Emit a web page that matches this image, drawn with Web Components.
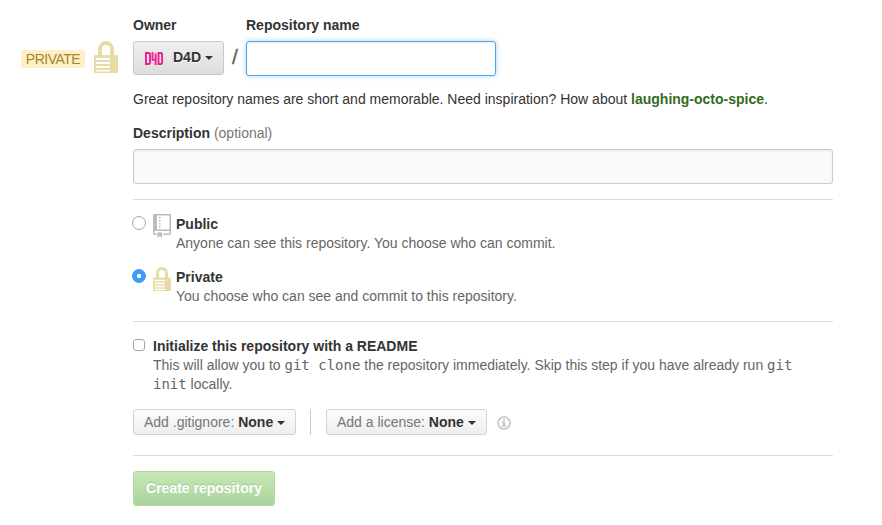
<!DOCTYPE html>
<html lang="en">
<head>
<meta charset="utf-8">
<title>Create a new repository</title>
<style>
html,body{margin:0;background:#fff}
body{width:882px;height:525px;overflow:hidden;font:14px/20px "Liberation Sans",Arial,sans-serif;color:#333}
</style>
</head>
<body>
<new-repository></new-repository>
<script>
const define = (name, css, html) => customElements.define(name, class extends HTMLElement {
  constructor() {
    super();
    const t = document.createElement('template');
    t.innerHTML = `<style>*{box-sizing:border-box}${css}</style>${html.trim()}`;
    this.attachShadow({mode: 'open'}).append(t.content.cloneNode(true));
  }
});

define('lock-icon', ':host{display:block;width:24px;height:32px}svg{display:block;width:100%;height:100%}', `
<svg viewBox="0 0 24 32"><path fill="#e9dba5" fill-rule="evenodd" d="M4 14V8.200a8 8.200 0 0 1 16 0V14h2.500q1.500 0 1.500 1.500v15q0 1.500-1.500 1.500h-21q-1.500 0-1.500-1.500v-15q0-1.500 1.500-1.500zM8 14h8V8.200a4 4.200 0 0 0-8 0zM2 17v2h14v-2zM2 21v2h14v-2zM2 25v2h14v-2zM2 29v1.600h14V29z"/></svg>`);

define('repo-icon', ':host{display:block;width:18px;height:24px}svg{display:block}', `
<svg width="18" height="24" viewBox="0 0 18 24"><g fill="#bbb"><path fill-rule="evenodd" d="M1 0h16q1 0 1 1v18.500q0 1.500-1.500 1.500H10v-1.500h6.500V17H1.500v2.500H4V21H1.500Q0 21 0 19.500V1q0-1 1-1zM4 1.500V15.500h12.500v-14z"/><path d="M6 3h1.500v1.500H6zM6 6h1.500v1.500H6zM6 9h1.500v1.500H6zM6 12h1.500v1.500H6zM4.500 18.500h4.500V24l-2.250-2L4.500 24z"/></g></svg>`);

define('info-icon', ':host{display:block;width:14px;height:14px}svg{display:block}', `
<svg width="14" height="14" viewBox="0 0 14 14"><circle cx="7" cy="7" r="6" fill="none" stroke="#ccc" stroke-width="1.900"/><path fill="#bbb" d="M6.200 3h1.700v1.600H6.200zM5 5.600h2.900v3.600H9v1.300H5V9.200h1.200V6.900H5z"/></svg>`);

define('team-avatar', ':host{display:block;width:20px;height:20px}svg{display:block}', `
<svg width="20" height="20" viewBox="0 0 20 20" fill="none" stroke="#ee1e93" stroke-width="1.900"><path d="M1.950 4.950h3l1 1v9.100l-1 1h-3zM8.500 4v7.900h4M11.600 5.500v11.500M14.500 4.950h2.600l1 1v9.100l-1 1h-2.600z"/></svg>`);

define('select-button', `
:host{display:flex;align-items:center;height:26px;padding:0 10px;border:1px solid #d3d3d3;border-radius:3px;background:linear-gradient(#fcfcfc,#eee);color:#333;font-weight:bold;white-space:pre;box-sizing:border-box}
:host([large]){height:34px;padding-bottom:2px;background:linear-gradient(#f0f0f0,#ddd);border-color:#c9c9c9;text-shadow:0 1px 0 rgba(255,255,255,.9)}
::slotted(span){font-weight:normal;color:#777}
::slotted(team-avatar){margin:1px 9px 0 0}
i{border:4px solid transparent;border-top-color:#333;border-bottom:0;margin:1px 0 0 4px}`, `<slot></slot><i></i>`);

define('text-input', `:host{display:block;height:35px}
input{display:block;width:100%;height:100%;margin:0;padding:7px 8px;font:inherit;border:1px solid #ccc;border-radius:3px;background:#fafafa;outline:none;box-shadow:inset 0 1px 2px rgba(0,0,0,.075)}
:host([active]) input{background:#fff;border-color:#51a7e8;box-shadow:inset 0 1px 2px rgba(0,0,0,.075),0 0 5px rgba(81,167,232,.5)}`, `<input type="text">`);

define('choice-mark', `:host{display:block;width:14px;height:14px;border:1px solid #a5a5a5;border-radius:50%;background:#fff;box-sizing:border-box}
:host([square]){width:12px;height:12px;border-radius:3px}
:host([checked]){border-color:#3b94f8;background:radial-gradient(circle,#fff 0 1.800px,#429bfb 2.500px)}`, '');

define('visibility-choice', `:host{display:grid;grid-template-columns:20px 23px 1fr;height:53px;margin-left:-1px;line-height:19px}
.mark{padding-top:2px}.icon{padding-left:1px}.text{padding:1px 0 0 1px}
::slotted(b){display:block}::slotted(span){color:#666}`,
`<div class="mark"><slot name="mark"></slot></div><div class="icon"><slot name="icon"></slot></div><div class="text"><slot></slot></div>`);

define('new-repository', `
:host{display:grid;grid-template-columns:118px 700px;column-gap:15px;padding-top:15px}
.side{display:flex;justify-content:flex-end;gap:9px;padding-top:26px;height:58px}
.badge{width:64px;height:18px;margin-top:9px;border-radius:3px;background:#ffefc6;color:#a1882b;text-align:center;line-height:19px;letter-spacing:-.5px}
.top{display:grid;grid-template-columns:91px 22px 250px;grid-template-rows:20px 35px;row-gap:6px}
.top b:nth-of-type(2){grid-column:3}
.slash{text-align:center;font-size:21px;line-height:31px;color:#666;-webkit-text-stroke:.4px #666}
p{margin:0}
.hint{height:20px;margin-top:13px}.hint b{color:#336b1c}
.desc{height:20px;margin:14px 0 6px}.desc span{color:#777}
hr{border:0;height:1px;background:#ddd;margin:0}
.choices{padding-top:14px;height:121px}
.readme{display:grid;grid-template-columns:20px 1fr;height:133px;padding-top:15px;line-height:19px}
.readme p{height:19px;color:#666}
code{font:14px/19px "DejaVu Sans Mono",monospace}
.readme choice-mark{margin-top:2px}
.options{display:flex;align-items:center;margin-top:15px;margin-left:-20px;height:26px}
.rule{width:1px;height:26px;background:#ccc;margin:0 15px 0 14px}
info-icon{margin:2px 0 0 10px}
button{display:block;margin:15px 0 0;padding:0;width:142px;height:35px;border:1px solid #b2d9a4;border-radius:3px;background:linear-gradient(#c4e9b5,#abd39d);font:bold 14px/33px "Liberation Sans",Arial,sans-serif;color:#fff;text-shadow:0 -1px 0 rgba(0,0,0,.15)}
`, `
<div class="side"><div class="badge">PRIVATE</div><lock-icon></lock-icon></div>
<main>
 <div class="top"><b>Owner</b><b>Repository name</b>
  <select-button large><team-avatar></team-avatar>D4D</select-button><div class="slash">/</div><text-input active></text-input></div>
 <p class="hint">Great repository names are short and memorable. Need inspiration? How about <b>laughing-octo-spice</b>.</p>
 <p class="desc"><b>Description</b> <span>(optional)</span></p>
 <text-input></text-input>
 <hr style="margin-top:15px">
 <div class="choices">
  <visibility-choice><choice-mark slot="mark"></choice-mark><repo-icon slot="icon"></repo-icon><b>Public</b><span>Anyone can see this repository. You choose who can commit.</span></visibility-choice>
  <visibility-choice><choice-mark slot="mark" checked></choice-mark><lock-icon slot="icon" style="width:18px;height:24px"></lock-icon><b>Private</b><span>You choose who can see and commit to this repository.</span></visibility-choice>
 </div>
 <hr>
 <div class="readme"><choice-mark square></choice-mark><div><b>Initialize this repository with a README</b>
  <p>This will allow you to <code>git clone</code> the repository immediately. Skip this step if you have already run <code>git</code></p>
  <p><code>init</code> locally.</p>
  <div class="options"><select-button style="width:163px"><span>Add .gitignore: </span>None</select-button><div class="rule"></div><select-button style="width:161px"><span>Add a license: </span>None</select-button><info-icon></info-icon></div></div></div>
 <hr>
 <button>Create repository</button>
</main>`);
</script>
</body>
</html>
